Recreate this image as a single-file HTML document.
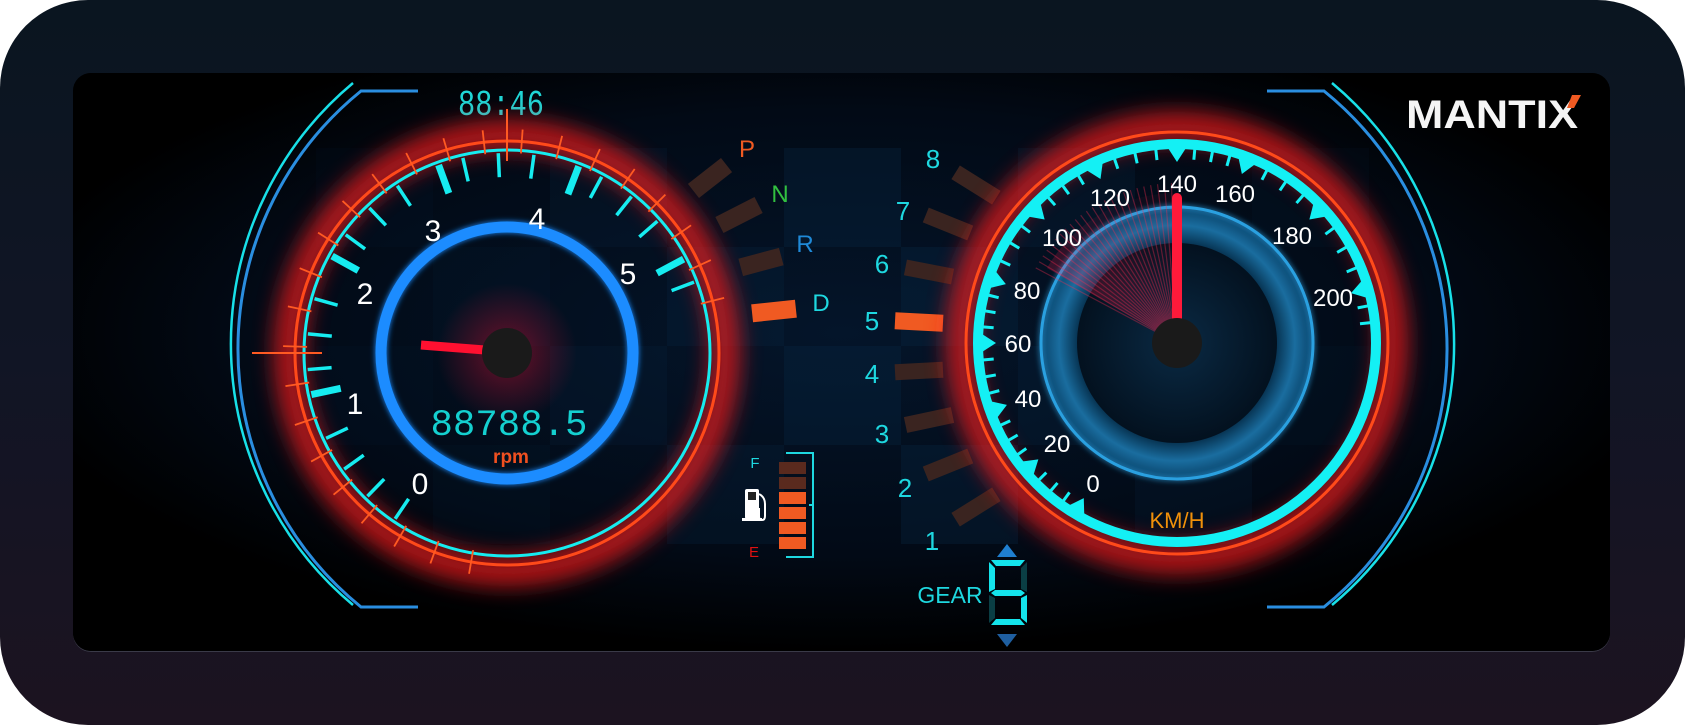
<!DOCTYPE html>
<html><head><meta charset="utf-8">
<style>
html,body{margin:0;padding:0;background:#fff;width:1685px;height:725px;overflow:hidden}
#frame{position:absolute;left:0;top:0;width:1685px;height:725px;border-radius:88px;background:linear-gradient(180deg,#0a1520 0%,#111525 50%,#1c1320 100%)}
#panel{position:absolute;left:73px;top:73px;width:1537px;height:578px;border-radius:18px;background:#000;box-shadow:0 1px 0 #3a3a48;overflow:hidden}
svg{position:absolute;left:0;top:0}
text{font-family:"Liberation Sans",sans-serif}
</style></head><body>
<div id="frame"></div>
<div id="panel"></div>
<svg width="1685" height="725" viewBox="0 0 1685 725" xmlns="http://www.w3.org/2000/svg">
<defs>
<clipPath id="pc"><rect x="73" y="73" width="1537" height="578" rx="18"/></clipPath>
<filter id="blur" x="-50%" y="-50%" width="200%" height="200%"><feGaussianBlur stdDeviation="11"/></filter>
<filter id="glow" x="-50%" y="-50%" width="200%" height="200%"><feGaussianBlur stdDeviation="3" result="b"/><feMerge><feMergeNode in="b"/><feMergeNode in="SourceGraphic"/></feMerge></filter>
<radialGradient id="bgc" cx="0.5" cy="0.45" r="0.55"><stop offset="0" stop-color="#04152a"/><stop offset="0.7" stop-color="#020a16"/><stop offset="1" stop-color="#000"/></radialGradient>
<radialGradient id="hubglow" cx="0.5" cy="0.5" r="0.5"><stop offset="0" stop-color="#c01030" stop-opacity="0.55"/><stop offset="1" stop-color="#c01030" stop-opacity="0"/></radialGradient>
<radialGradient id="ann" cx="0.5" cy="0.5" r="0.5"><stop offset="0.72" stop-color="#06314f"/><stop offset="0.86" stop-color="#1a6d9f"/><stop offset="0.97" stop-color="#0c4a73"/><stop offset="1" stop-color="#0a3050"/></radialGradient>
<radialGradient id="inner" cx="0.5" cy="0.5" r="0.5"><stop offset="0" stop-color="#0a2a44"/><stop offset="1" stop-color="#03111f"/></radialGradient>
<radialGradient id="fan" cx="0" cy="1" r="1"><stop offset="0" stop-color="#ff2050" stop-opacity="0.85"/><stop offset="1" stop-color="#ff2050" stop-opacity="0.1"/></radialGradient>
</defs>
<g clip-path="url(#pc)">
<rect x="73" y="73" width="1537" height="578" fill="url(#bgc)"/>
<g id="checker" opacity="0.55"></g>
</g>

<!-- bracket arcs -->
<path d="M353 83 A340 340 0 0 0 353 605" fill="none" stroke="#18e0e8" stroke-width="2.5"/>
<path d="M418 91 L361 91 A332 332 0 0 0 361 607 L418 607" fill="none" stroke="#2a8ee0" stroke-width="3"/>
<path d="M1332 83 A340 340 0 0 1 1332 605" fill="none" stroke="#18e0e8" stroke-width="2.5"/>
<path d="M1267 91 L1324 91 A332 332 0 0 1 1324 607 L1267 607" fill="none" stroke="#2a8ee0" stroke-width="3"/>

<!-- clock -->
<text x="501" y="115" font-size="36" fill="#1fd6d6" text-anchor="middle" textLength="86" lengthAdjust="spacingAndGlyphs" style="font-family:'Liberation Mono',monospace">88:46</text>

<!-- LEFT GAUGE -->
<circle cx="507" cy="353" r="218" fill="none" stroke="#ff1e1e" stroke-width="30" opacity="0.7" filter="url(#blur)"/>
<circle cx="507" cy="353" r="70" fill="url(#hubglow)"/>
<circle cx="507" cy="353" r="212" fill="none" stroke="#ff4a1a" stroke-width="3"/>
<circle cx="507" cy="353" r="203" fill="none" stroke="#16ecf0" stroke-width="3"/>
<g id="lt"></g>
<circle cx="507" cy="353" r="126" fill="none" stroke="#1a8cff" stroke-width="11" filter="url(#glow)"/>
<g fill="#ffffff" font-size="30" text-anchor="middle">
<text x="420" y="494">0</text><text x="355" y="414">1</text><text x="365" y="304">2</text>
<text x="433" y="241">3</text><text x="537" y="229">4</text><text x="628" y="284">5</text>
</g>
<line x1="421" y1="345" x2="485" y2="350" stroke="#ff1030" stroke-width="9"/>
<circle cx="507" cy="353" r="25" fill="#1a1a1a"/>
<text x="509" y="435" font-size="37" fill="#14d0d0" text-anchor="middle" textLength="157" lengthAdjust="spacingAndGlyphs" style="font-family:'Liberation Mono',monospace">88788.5</text>
<text x="511" y="463" font-size="19" font-weight="bold" fill="#f05020" text-anchor="middle">rpm</text>

<!-- CENTER -->
<g id="bars"></g>
<g font-size="24" text-anchor="middle">
<text x="747" y="157" fill="#f05a22">P</text><text x="780" y="202" fill="#32c040">N</text>
<text x="805" y="252" fill="#1f8ad8">R</text><text x="821" y="311" fill="#1ed8e0">D</text>
</g>
<g font-size="26" fill="#1ed8e0" text-anchor="middle">
<text x="933" y="168">8</text><text x="903" y="220">7</text><text x="882" y="273">6</text><text x="872" y="330">5</text>
<text x="872" y="383">4</text><text x="882" y="443">3</text><text x="905" y="497">2</text><text x="932" y="550">1</text>
</g>
<!-- fuel -->
<text x="755" y="468" font-size="15" fill="#1ed8e0" text-anchor="middle">F</text>
<text x="754" y="557" font-size="15" fill="#e01010" text-anchor="middle">E</text>
<g fill="#ffffff">
<rect x="745" y="489" width="14" height="30" rx="2"/>
<rect x="742" y="518" width="20" height="3"/>
</g>
<path d="M759 494 q6 3 6 10 v12 q0 4 -3 4 q-3 0 -3 -4 v-8" fill="none" stroke="#fff" stroke-width="2"/>
<rect x="748" y="492" width="8" height="8" fill="#222"/>
<g id="fuel"></g>
<path d="M786 453 H813 V557 H786 M813 505 h-4" fill="none" stroke="#1ed8e0" stroke-width="2"/>
<!-- gear -->
<text x="950" y="603" font-size="23" fill="#1ed8e0" text-anchor="middle">GEAR</text>
<polygon points="997,557 1017,557 1007,544" fill="#1f7fd0"/>
<polygon points="997,634 1017,634 1007,647" fill="#1f5fa0"/>
<g fill="#14e4ec">
<polygon points="991,560 1025,560 1020,566 996,566"/>
<polygon points="989,562 995,568 995,589 989,592"/>
<polygon points="991,593 995,590 1021,590 1025,593 1021,596 995,596"/>
<polygon points="1027,595 1027,623 1021,618 1021,598"/>
<polygon points="991,625 1025,625 1020,619 996,619"/>
</g>
<g fill="#0a3e44">
<polygon points="1027,562 1027,592 1021,589 1021,568"/>
<polygon points="989,595 995,598 995,618 989,623"/>
</g>

<!-- RIGHT GAUGE -->
<circle cx="1177" cy="343" r="216" fill="none" stroke="#ff1e1e" stroke-width="30" opacity="0.7" filter="url(#blur)"/>
<circle cx="1177" cy="343" r="211" fill="none" stroke="#ff4a1a" stroke-width="3"/>
<circle cx="1177" cy="343" r="199" fill="none" stroke="#14f0f4" stroke-width="10"/>
<g id="rt"></g>
<circle cx="1177" cy="343" r="137" fill="url(#ann)"/>
<circle cx="1177" cy="343" r="136" fill="none" stroke="#2aa0e0" stroke-width="3" filter="url(#glow)"/>
<circle cx="1177" cy="343" r="100" fill="url(#inner)"/>
<g id="fanlines"></g>
<path d="M1177 343 L1047 268 A150 150 0 0 1 1177 193 Z" fill="url(#fan)" opacity="0.45"/>
<g fill="#ffffff" font-size="24" text-anchor="middle">
<text x="1093" y="492">0</text><text x="1057" y="452">20</text><text x="1028" y="407">40</text>
<text x="1018" y="352">60</text><text x="1027" y="299">80</text><text x="1062" y="246">100</text>
<text x="1110" y="206">120</text><text x="1177" y="192">140</text><text x="1235" y="202">160</text>
<text x="1292" y="244">180</text><text x="1333" y="306">200</text>
</g>
<rect x="1172" y="193" width="10" height="150" rx="5" fill="#ff1a3a"/>
<circle cx="1177" cy="343" r="25" fill="#1a1a1a"/>
<text x="1177" y="528" font-size="22" fill="#f0900a" text-anchor="middle">KM/H</text>

<!-- logo -->
<text x="1406" y="128" font-size="40" font-weight="bold" fill="#f5f5f5" textLength="172" lengthAdjust="spacingAndGlyphs">MANTIX</text>
<polygon points="1572,95 1581,95 1574,108 1567,108" fill="#f05a22"/>
</svg>
<script>
var NS="http://www.w3.org/2000/svg";
function el(p,t,a){var e=document.createElementNS(NS,t);for(var k in a)e.setAttribute(k,a[k]);p.appendChild(e);return e}
function pt(cx,cy,a,r){var d=a*Math.PI/180;return [cx+r*Math.sin(d),cy-r*Math.cos(d)]}
function ln(g,cx,cy,a,r1,r2,c,w,o){var p=pt(cx,cy,a,r1),q=pt(cx,cy,a,r2);el(g,"line",{x1:p[0],y1:p[1],x2:q[0],y2:q[1],stroke:c,"stroke-width":w,opacity:o||1})}
var ch=document.getElementById("checker");
for(var i=0;i<9;i++)for(var j=0;j<4;j++){
 if((i+j)%2==0){var x=316+i*117,y=148+j*99;
 var op=1-Math.abs(i-4.5)/5;el(ch,"rect",{x:x,y:y,width:117,height:99,fill:"#0a2a48",opacity:Math.max(0.15,op*0.6)})}}
var lt=document.getElementById("lt");
for(var k=-1;k<24;k++){var a=-160+k*10.25;ln(lt,507,353,a,200,224,"#ff5a22",1.8)}
ln(lt,507,353,0,192,244,"#ff5a22",2);ln(lt,507,353,-90,185,255,"#ff5a22",2);
for(var k=0;k<=21;k++){var a=-146+k*10.25;var maj=(k%4==0&&k>0);
 ln(lt,507,353,a+(maj?3:0),maj?170:176,200,"#16ecf0",maj?7:3.5)}
var rt=document.getElementById("rt");
var ang=[-149,-130,-110,-90,-71,-47,-25,0,21,47,74];
for(var i=0;i<ang.length;i++){
 var p1=pt(1177,343,ang[i]-2.6,195),p2=pt(1177,343,ang[i]+2.6,195),p3=pt(1177,343,ang[i],181);
 el(rt,"polygon",{points:p1+" "+p2+" "+p3,fill:"#14f0f4"});
 if(i<ang.length-1){for(var s=1;s<4;s++){var a=ang[i]+(ang[i+1]-ang[i])*s/4;ln(rt,1177,343,a,195,184,"#14f0f4",3)}}
}
for(var s=1;s<3;s++){ln(rt,1177,343,74+s*5,195,184,"#14f0f4",3)}
var fl=document.getElementById("fanlines");
for(var a=-62;a<0;a+=2.5){ln(fl,1177,343,a,20,160,"#ff2a50",1.2,0.35)}
var bars=document.getElementById("bars");
function bar(cx,cy,rot,c,w,h){el(bars,"rect",{x:cx-w/2,y:cy-h/2,width:w,height:h,fill:c,transform:"rotate("+rot+" "+cx+" "+cy+")"})}
var dk="#3a2420";
bar(710,178,-38,dk,42,18);bar(739,215,-27,dk,44,18);bar(761,262,-15,dk,42,18);bar(774,311,-6,"#f05a22",44,18);
bar(976,185,32,dk,48,16);bar(948,224,22,dk,48,16);bar(929,272,11,dk,48,16);bar(919,322,3,"#f05a22",48,17);
bar(919,371,-3,dk,48,16);bar(929,420,-12,dk,48,16);bar(948,465,-22,dk,48,16);bar(976,507,-32,dk,48,16);
var fu=document.getElementById("fuel");
for(var i=0;i<6;i++){el(fu,"rect",{x:779,y:462+i*15,width:27,height:12,fill:i<2?"#5a2a1e":"#f05a22"})}
</script>
</body></html>
